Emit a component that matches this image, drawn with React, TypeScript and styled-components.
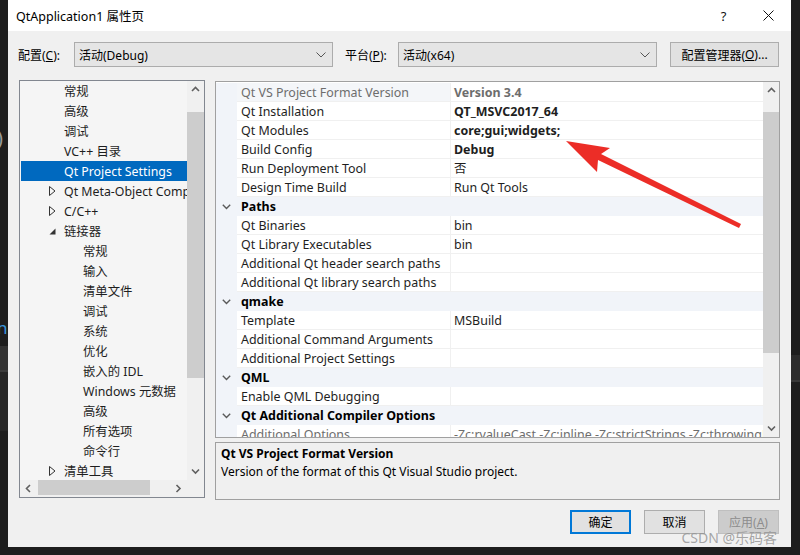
import React from 'react';
import styled, { createGlobalStyle } from 'styled-components';

const UI_FONT = `"Noto Sans", "Noto Sans CJK SC", sans-serif`;

const GlobalStyle = createGlobalStyle`
  html, body {
    margin: 0;
    padding: 0;
    background: #1e1e1e;
  }
  * {
    box-sizing: border-box;
  }
`;

type TreeItem = {
  label: string;
  level: number;
  expander?: 'closed' | 'open';
  selected?: boolean;
};

const treeItems: TreeItem[] = [
  { label: '常规', level: 0 },
  { label: '高级', level: 0 },
  { label: '调试', level: 0 },
  { label: 'VC++ 目录', level: 0 },
  { label: 'Qt Project Settings', level: 0, selected: true },
  { label: 'Qt Meta-Object Compiler', level: 0, expander: 'closed' },
  { label: 'C/C++', level: 0, expander: 'closed' },
  { label: '链接器', level: 0, expander: 'open' },
  { label: '常规', level: 1 },
  { label: '输入', level: 1 },
  { label: '清单文件', level: 1 },
  { label: '调试', level: 1 },
  { label: '系统', level: 1 },
  { label: '优化', level: 1 },
  { label: '嵌入的 IDL', level: 1 },
  { label: 'Windows 元数据', level: 1 },
  { label: '高级', level: 1 },
  { label: '所有选项', level: 1 },
  { label: '命令行', level: 1 },
  { label: '清单工具', level: 0, expander: 'closed' },
];

type GridItem =
  | { kind: 'cat'; label: string }
  | { kind: 'prop'; label: string; value?: string; bold?: boolean; dim?: boolean };

const gridItems: GridItem[] = [
  { kind: 'prop', label: 'Qt VS Project Format Version', value: 'Version 3.4', bold: true, dim: true },
  { kind: 'prop', label: 'Qt Installation', value: 'QT_MSVC2017_64', bold: true },
  { kind: 'prop', label: 'Qt Modules', value: 'core;gui;widgets;', bold: true },
  { kind: 'prop', label: 'Build Config', value: 'Debug', bold: true },
  { kind: 'prop', label: 'Run Deployment Tool', value: '否' },
  { kind: 'prop', label: 'Design Time Build', value: 'Run Qt Tools' },
  { kind: 'cat', label: 'Paths' },
  { kind: 'prop', label: 'Qt Binaries', value: 'bin' },
  { kind: 'prop', label: 'Qt Library Executables', value: 'bin' },
  { kind: 'prop', label: 'Additional Qt header search paths' },
  { kind: 'prop', label: 'Additional Qt library search paths' },
  { kind: 'cat', label: 'qmake' },
  { kind: 'prop', label: 'Template', value: 'MSBuild' },
  { kind: 'prop', label: 'Additional Command Arguments' },
  { kind: 'prop', label: 'Additional Project Settings' },
  { kind: 'cat', label: 'QML' },
  { kind: 'prop', label: 'Enable QML Debugging' },
  { kind: 'cat', label: 'Qt Additional Compiler Options' },
  {
    kind: 'prop',
    label: 'Additional Options',
    value: '-Zc:rvalueCast -Zc:inline -Zc:strictStrings -Zc:throwingNew -permissive-',
    dim: true,
  },
];

const Chevron = ({ dir }: { dir: 'up' | 'down' | 'left' | 'right' }) => {
  const pts = {
    up: '1,5 4.5,1.5 8,5',
    down: '1,1.5 4.5,5 8,1.5',
    left: '5,1 1.5,4.5 5,8',
    right: '1.5,1 5,4.5 1.5,8',
  }[dir];
  const vertical = dir === 'up' || dir === 'down';
  return (
    <svg width={vertical ? 9 : 7} height={vertical ? 7 : 9}>
      <polyline points={pts} fill="none" stroke="#606060" strokeWidth="1.6" />
    </svg>
  );
};

export default function App() {
  return (
    <>
      <GlobalStyle />
      <Screen>
        <Backdrop>
          <Paren>)</Paren>
          <BlueGlyph>n</BlueGlyph>
          <GrayBand />
          <DarkBand />
          <RightBand />
        </Backdrop>

        <Dialog>
          <TitleBar>
            <Title>QtApplication1 属性页</Title>
            <TitleButton>?</TitleButton>
            <TitleButton>
              <svg width="11" height="11">
                <line x1="0.5" y1="0.5" x2="10.5" y2="10.5" stroke="#111" strokeWidth="1" />
                <line x1="10.5" y1="0.5" x2="0.5" y2="10.5" stroke="#111" strokeWidth="1" />
              </svg>
            </TitleButton>
          </TitleBar>

          <ConfigRow>
            <FieldLabel $width={56}>
              配置(<u>C</u>):
            </FieldLabel>
            <Combo>
              <span>活动(Debug)</span>
              <svg width="10" height="6">
                <polyline points="0.5,0.5 5,5 9.5,0.5" fill="none" stroke="#555" strokeWidth="1" />
              </svg>
            </Combo>
            <FieldLabel $width={53} $gap={12}>
              平台(<u>P</u>):
            </FieldLabel>
            <Combo>
              <span>活动(x64)</span>
              <svg width="10" height="6">
                <polyline points="0.5,0.5 5,5 9.5,0.5" fill="none" stroke="#555" strokeWidth="1" />
              </svg>
            </Combo>
            <ManagerButton>
              配置管理器(<u>O</u>)...
            </ManagerButton>
          </ConfigRow>

          <Main>
            <Tree>
              <TreeTop>
                <TreeRows>
                  {treeItems.map((item, i) => (
                    <TreeRow key={i} $selected={item.selected}>
                      <Expander $level={item.level}>
                        {item.expander === 'closed' && (
                          <svg width="7" height="10">
                            <polygon points="0.5,0.5 6,5 0.5,9.5" fill="none" stroke="#333" strokeWidth="1" />
                          </svg>
                        )}
                        {item.expander === 'open' && (
                          <svg width="7" height="7">
                            <polygon points="6.5,0.5 6.5,6.5 0.5,6.5" fill="#333" />
                          </svg>
                        )}
                      </Expander>
                      <TreeLabel>{item.label}</TreeLabel>
                    </TreeRow>
                  ))}
                </TreeRows>
                <VScroll>
                  <ScrollArrow>
                    <Chevron dir="up" />
                  </ScrollArrow>
                  <VTrack>
                    <VThumb $offset={14} $size={266} />
                  </VTrack>
                  <ScrollArrow>
                    <Chevron dir="down" />
                  </ScrollArrow>
                </VScroll>
              </TreeTop>
              <HScroll>
                <ScrollArrow $horizontal>
                  <Chevron dir="left" />
                </ScrollArrow>
                <HTrack>
                  <HThumb />
                </HTrack>
                <ScrollArrow $horizontal>
                  <Chevron dir="right" />
                </ScrollArrow>
                <Corner />
              </HScroll>
            </Tree>

            <RightColumn>
              <Grid>
                <GridRows>
                  {gridItems.map((item, i) =>
                    item.kind === 'cat' ? (
                      <CatRow key={i}>
                        <Margin>
                          <svg width="9" height="6">
                            <polyline points="0.8,0.8 4.5,4.5 8.2,0.8" fill="none" stroke="#5a5a5a" strokeWidth="1.4" />
                          </svg>
                        </Margin>
                        <CatLabel>{item.label}</CatLabel>
                      </CatRow>
                    ) : (
                      <PropRow key={i}>
                        <Margin />
                        <PropLabel $dim={item.dim} $first={i === 0}>
                          {item.label}
                        </PropLabel>
                        <PropValue $bold={item.bold} $dim={item.dim}>
                          {item.value}
                        </PropValue>
                      </PropRow>
                    )
                  )}
                </GridRows>
                <VScroll $grid>
                  <ScrollArrow>
                    <Chevron dir="up" />
                  </ScrollArrow>
                  <VTrack>
                    <VThumb $offset={13} $size={241} />
                  </VTrack>
                  <ScrollArrow>
                    <Chevron dir="down" />
                  </ScrollArrow>
                </VScroll>
              </Grid>

              <Description>
                <DescTitle>Qt VS Project Format Version</DescTitle>
                <DescText>Version of the format of this Qt Visual Studio project.</DescText>
              </Description>
            </RightColumn>
          </Main>

          <ButtonRow>
            <DialogButton $default>确定</DialogButton>
            <DialogButton>取消</DialogButton>
            <DialogButton $disabled>
              应用(<u>A</u>)
            </DialogButton>
          </ButtonRow>
        </Dialog>

        <Annotation width="800" height="555">
          <polygon
            points="566,141 610,148 601,154 741,224 739,228 598,160 597,172"
            fill="#ec2d27"
          />
        </Annotation>
        <Watermark>CSDN @乐码客</Watermark>
      </Screen>
    </>
  );
}

const Screen = styled.div`
  position: relative;
  width: 800px;
  height: 555px;
  overflow: hidden;
  padding-left: 8px;
  background: #1e1e1e;
  font-family: ${UI_FONT};
`;

const Backdrop = styled.div`
  position: absolute;
  inset: 0;
`;

const Paren = styled.span`
  position: absolute;
  left: -3px;
  top: 124px;
  color: #9a9a9a;
  font-size: 20px;
  font-family: ${UI_FONT};
`;

const BlueGlyph = styled.span`
  position: absolute;
  left: -3px;
  top: 316px;
  color: #3a96dd;
  font-size: 17px;
  font-family: ${UI_FONT};
`;

const GrayBand = styled.div`
  position: absolute;
  left: 0;
  top: 346px;
  width: 8px;
  height: 26px;
  background: #333333;
  border-bottom: 2px solid #3c3c3c;
`;

const DarkBand = styled.div`
  position: absolute;
  left: 0;
  top: 372px;
  width: 8px;
  height: 59px;
  background: #262626;
`;

const RightBand = styled.div`
  position: absolute;
  right: 0;
  top: 355px;
  width: 9px;
  height: 27px;
  background: #2c2c2c;
  border-bottom: 2px solid #383838;
`;

const Dialog = styled.div`
  position: relative;
  width: 783px;
  height: 547px;
  background: #f0f0f0;
  display: flex;
  flex-direction: column;
  color: #000;
  font-size: 12px;
`;

const TitleBar = styled.div`
  height: 31px;
  background: #ffffff;
  display: flex;
  align-items: center;
  padding: 0 0 0 8px;
`;

const Title = styled.div`
  flex: 1;
  font-size: 12.5px;
  color: #000;
`;

const TitleButton = styled.div`
  width: 45px;
  height: 31px;
  display: flex;
  align-items: center;
  justify-content: center;
  font-size: 13px;
  color: #111;
`;

const ConfigRow = styled.div`
  display: flex;
  align-items: center;
  margin-top: 11px;
  padding-left: 10px;
  height: 25px;
`;

const FieldLabel = styled.div<{ $width: number; $gap?: number }>`
  width: ${(p) => p.$width}px;
  margin-left: ${(p) => p.$gap ?? 0}px;
  white-space: nowrap;
`;

const Combo = styled.div`
  width: 259px;
  height: 25px;
  display: flex;
  align-items: center;
  justify-content: space-between;
  padding: 0 6px 0 4px;
  background: #e5e5e5;
  border: 1px solid #acacac;
`;

const ManagerButton = styled.div`
  width: 109px;
  height: 25px;
  margin-left: 13px;
  display: flex;
  align-items: center;
  justify-content: center;
  background: #e1e1e1;
  border: 1px solid #adadad;
  white-space: nowrap;
`;

const Main = styled.div`
  display: flex;
  margin-top: 13px;
  padding-left: 11px;
`;

const Tree = styled.div`
  width: 186px;
  height: 418px;
  border: 1px solid #828790;
  background: #f5f5f5;
  display: flex;
  flex-direction: column;
  font-size: 12.35px;
`;

const TreeTop = styled.div`
  flex: 1;
  display: flex;
  min-height: 0;
`;

const TreeRows = styled.div`
  flex: 1;
  overflow: hidden;
  padding: 0 0 0 1px;
`;

const TreeRow = styled.div<{ $selected?: boolean }>`
  height: 20px;
  display: flex;
  align-items: center;
  white-space: nowrap;
  overflow: hidden;
  background: ${(p) => (p.$selected ? '#0069bf' : 'transparent')};
  color: ${(p) => (p.$selected ? '#ffffff' : '#1e1e1e')};
`;

const Expander = styled.div<{ $level: number }>`
  width: ${(p) => 43 + p.$level * 19}px;
  flex: none;
  display: flex;
  align-items: center;
  justify-content: flex-end;
  padding-right: ${(p) => 8 + p.$level * 19}px;
`;

const TreeLabel = styled.span``;

const VScroll = styled.div<{ $grid?: boolean }>`
  width: ${(p) => (p.$grid ? 16 : 17)}px;
  flex: none;
  display: flex;
  flex-direction: column;
  background: #f0f0f0;
`;

const ScrollArrow = styled.div<{ $horizontal?: boolean }>`
  width: ${(p) => (p.$horizontal ? '17px' : '100%')};
  height: ${(p) => (p.$horizontal ? '100%' : '17px')};
  flex: none;
  display: flex;
  align-items: center;
  justify-content: center;
`;

const VTrack = styled.div`
  flex: 1;
  display: flex;
  flex-direction: column;
  align-items: center;
`;

const VThumb = styled.div<{ $offset: number; $size: number }>`
  width: 100%;
  margin-top: ${(p) => p.$offset}px;
  height: ${(p) => p.$size}px;
  background: #cdcdcd;
`;

const HScroll = styled.div`
  height: 17px;
  flex: none;
  display: flex;
  background: #f0f0f0;
`;

const HTrack = styled.div`
  flex: 1;
  display: flex;
  align-items: stretch;
`;

const HThumb = styled.div`
  width: 112px;
  margin: 0 0 2px 1px;
  background: #cdcdcd;
`;

const Corner = styled.div`
  width: 17px;
  flex: none;
  background: #f0f0f0;
`;

const RightColumn = styled.div`
  margin-left: 10px;
  width: 565px;
  display: flex;
  flex-direction: column;
`;

const Grid = styled.div`
  margin-top: 1px;
  height: 357px;
  border: 1px solid #a0a0a0;
  background: #ffffff;
  display: flex;
  font-size: 12.45px;
`;

const GridRows = styled.div`
  flex: 1;
  overflow: hidden;
  padding-top: 1px;
`;

const RowBase = styled.div`
  height: 19px;
  display: grid;
  grid-template-columns: 21px 214px 1fr;
  white-space: nowrap;
`;

const CatRow = styled(RowBase)`
  background: #f1f4f9;
`;

const PropRow = styled(RowBase)``;

const Margin = styled.div`
  background: #f1f4f9;
  display: flex;
  align-items: center;
  justify-content: center;
`;

const CatLabel = styled.div`
  grid-column: 2 / 4;
  font-weight: 700;
  padding: 1px 0 0 4px;
  line-height: 18px;
`;

const PropLabel = styled.div<{ $dim?: boolean; $first?: boolean }>`
  padding: 1px 0 0 4px;
  line-height: 17px;
  overflow: hidden;
  color: ${(p) => (p.$dim ? '#6d6d6d' : '#1e1e1e')};
  background: ${(p) => (p.$first ? '#f4f6f9' : '#ffffff')};
  border-bottom: 1px solid #f0f0f0;
  border-right: 1px solid #f0f0f0;
`;

const PropValue = styled.div<{ $bold?: boolean; $dim?: boolean }>`
  padding: 1px 0 0 3px;
  line-height: 17px;
  overflow: hidden;
  font-weight: ${(p) => (p.$bold ? 700 : 400)};
  color: ${(p) => (p.$dim ? '#6d6d6d' : '#1e1e1e')};
  border-bottom: 1px solid #f0f0f0;
`;

const Description = styled.div`
  margin-top: 4px;
  height: 58px;
  border: 1px solid #a0a0a0;
  background: #f0f0f0;
  padding: 2px 5px;
`;

const DescTitle = styled.div`
  font-weight: 700;
  line-height: 18px;
`;

const DescText = styled.div`
  line-height: 18px;
`;

const ButtonRow = styled.div`
  display: flex;
  justify-content: flex-end;
  gap: 13px;
  margin-top: 10px;
  padding-right: 12px;
`;

const DialogButton = styled.div<{ $default?: boolean; $disabled?: boolean }>`
  width: 61px;
  height: 24px;
  display: flex;
  align-items: center;
  justify-content: center;
  background: ${(p) => (p.$disabled ? '#cccccc' : '#e1e1e1')};
  border: ${(p) => (p.$default ? '2px solid #0078d7' : `1px solid ${p.$disabled ? '#bfbfbf' : '#adadad'}`)};
  color: ${(p) => (p.$disabled ? '#8d8d8d' : '#000')};
  white-space: nowrap;
`;

const Annotation = styled.svg`
  position: absolute;
  left: 0;
  top: 0;
  pointer-events: none;
`;

const Watermark = styled.div`
  position: absolute;
  right: 23px;
  bottom: 8px;
  font-size: 14px;
  color: rgba(150, 150, 150, 0.85);
  font-family: ${UI_FONT};
  white-space: nowrap;
`;
